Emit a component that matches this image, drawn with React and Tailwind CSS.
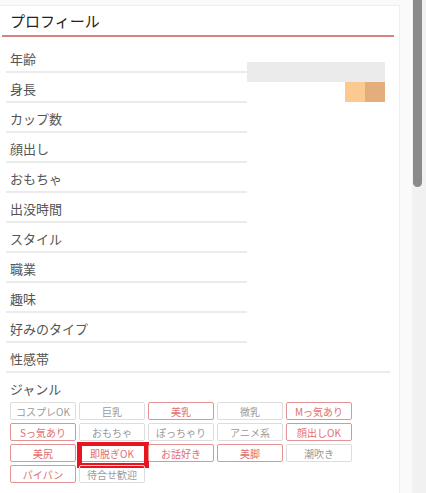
const rows = ["年齢", "身長", "カップ数", "顔出し", "おもちゃ", "出没時間", "スタイル", "職業", "趣味", "好みのタイプ"]

const tags = [
  ["コスプレOK", false],
  ["巨乳", false],
  ["美乳", true],
  ["微乳", false],
  ["Mっ気あり", true],
  ["Sっ気あり", true],
  ["おもちゃ", false],
  ["ぽっちゃり", false],
  ["アニメ系", false],
  ["顔出しOK", true],
  ["美尻", true],
  ["即脱ぎOK", true],
  ["お話好き", true],
  ["美脚", true],
  ["潮吹き", false],
  ["パイパン", true],
  ["待合せ歓迎", false],
]

function App() {
  return (
    <div className="flex h-[493px] w-[426px] overflow-hidden bg-[#fafafa] font-['Noto_Sans_CJK_JP','Noto_Sans',sans-serif]">
      <div className="w-[412px] pt-[5px]">
        <div className="h-full w-[400px] border-t border-r border-[#eeeeee] bg-white">
          <h2 className="ml-[2px] mr-[5px] border-b-2 border-[#d98282] px-[8px] pt-[4px] pb-[3px] text-[15px] leading-[22px] text-[#222]">
            プロフィール
          </h2>

          <div className="mt-[6px] pl-[6px]">
            <div className="flex">
              <div className="w-[241px]">
                {rows.map((r) => (
                  <div key={r} className="border-b-2 border-[#ebebeb] px-[4px] pt-[6px] pb-[2px] text-[13px] leading-[20px] text-[#555]">
                    {r}
                  </div>
                ))}
              </div>
              <div className="mt-[19px] w-[138px]">
                <div className="h-[20px] bg-[#ebebeb]"></div>
                <div className="flex justify-end">
                  <div className="h-[20px] w-[20px] bg-[#fcc990]"></div>
                  <div className="h-[20px] w-[20px] bg-[#e4ae7c]"></div>
                </div>
              </div>
            </div>

            <div className="w-[384px] border-b-2 border-[#ebebeb] px-[4px] pt-[6px] pb-[2px] text-[13px] leading-[20px] text-[#555]">
              性感帯
            </div>

            <div className="px-[4px] pt-[6px] text-[13px] leading-[20px] text-[#555]">ジャンル</div>

            <div className="mt-[3px] flex w-[350px] flex-wrap gap-[3px] pl-[4px]">
              {tags.map(([t, on]) => (
                <div
                  key={t}
                  className={
                    on
                      ? "relative flex h-[18px] w-[66px] items-center justify-center rounded-[2px] border border-[#e39393] text-[10px] text-[#e46e6e]"
                      : "relative flex h-[18px] w-[66px] items-center justify-center rounded-[2px] border border-[#dddddd] text-[10px] text-[#9a9a9a]"
                  }
                >
                  {t}
                  {t === "即脱ぎOK" && (
                    <div className="absolute -left-[3px] -top-[3px] h-[26px] w-[72px] border-[5px] border-t-[4px] border-[#e8151f]"></div>
                  )}
                </div>
              ))}
            </div>
          </div>
        </div>
      </div>

      <div className="relative w-[14px] bg-[#f1f1f1]">
        <div className="ml-[1px] h-[187px] w-[9px] rounded-b-[5px] bg-[#8a8a8a]"></div>
      </div>
    </div>
  )
}

export default App
